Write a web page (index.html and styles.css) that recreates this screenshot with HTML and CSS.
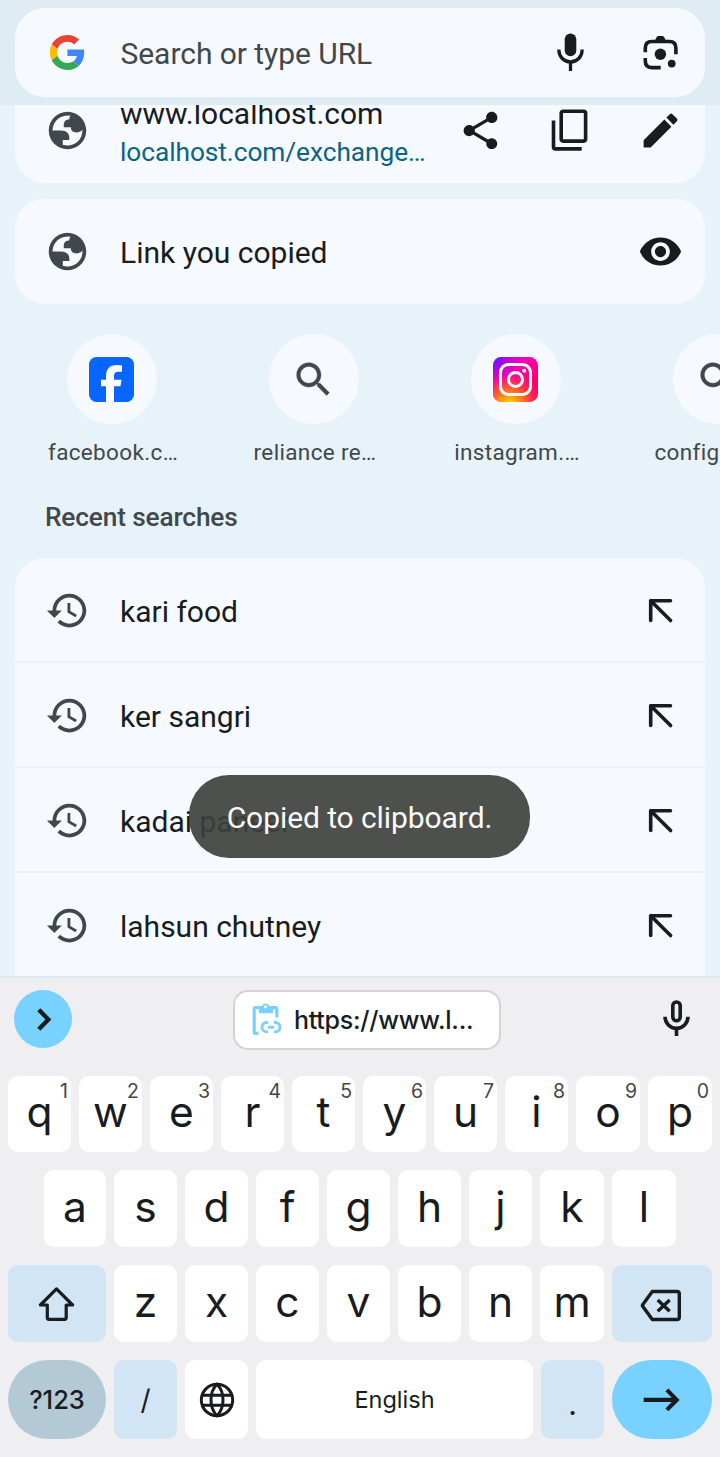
FILE: index.html
```html
<!DOCTYPE html>
<html lang="en">
<head>
<meta charset="utf-8">
<title>Search</title>
<link rel="stylesheet" href="styles.css">
</head>
<body>
<svg class="defs" width="0" height="0" aria-hidden="true">
  <symbol id="globe" viewBox="0 0 24 24"><path fill-rule="evenodd" d="M12 2C6.480 2 2 6.480 2 12s4.480 10 10 10 10-4.480 10-10S17.520 2 12 2zM4 12h4.400c3.407.022 4.922 1.730 4.543 5.127H9.488v2.470a8.004 8.004 0 0 0 10.498-8.083C19.327 12.504 18.332 13 17 13c-2.137 0-3.206-.916-3.206-2.750h-3.748c-.274-2.728.683-4.092 2.870-4.092 0-.975.327-1.597.811-1.970A8.004 8.004 0 0 0 4 12z"/></symbol>
  <symbol id="search" viewBox="0 0 24 24"><path stroke="currentColor" stroke-width=".2" d="M15.500 14h-.790l-.280-.270C15.410 12.590 16 11.110 16 9.500 16 5.910 13.090 3 9.500 3S3 5.910 3 9.500 5.910 16 9.500 16c1.610 0 3.090-.590 4.230-1.570l.270.280v.790l5 4.990L20.490 19l-4.990-5zm-6 0C7.010 14 5 11.990 5 9.500S7.010 5 9.500 5 14 7.010 14 9.500 11.990 14 9.500 14z"/></symbol>
  <symbol id="history" viewBox="0 0 24 24"><path d="M13 3c-4.970 0-9 4.030-9 9H1l3.890 3.890.070.140L9 12H6c0-3.870 3.130-7 7-7s7 3.130 7 7-3.130 7-7 7c-1.930 0-3.680-.790-4.940-2.060l-1.420 1.420C8.270 19.990 10.510 21 13 21c4.970 0 9-4.030 9-9s-4.030-9-9-9zm-1 5v5l4.280 2.540.720-1.210-3.500-2.080V8H12z"/></symbol>
  <symbol id="fill-up" viewBox="0 0 45 45"><path d="M32.500 12.700H12.700V32.500M12.700 12.700L32.600 32.600" fill="none" stroke="currentColor" stroke-width="3.600" stroke-linecap="round" stroke-linejoin="round"/></symbol>
</svg>

<header class="header">
  <div class="omnibox">
    <svg class="icon" viewBox="0 0 45 45"><g transform="translate(4.900 4.900) scale(.73)"><path fill="#EA4335" d="M24 9.500c3.540 0 6.710 1.220 9.210 3.600l6.850-6.850C35.900 2.380 30.470 0 24 0 14.620 0 6.510 5.380 2.560 13.220l7.980 6.190C12.430 13.720 17.740 9.500 24 9.500z"/><path fill="#4285F4" d="M46.980 24.550c0-1.570-.150-3.090-.380-4.550H24v9.020h12.940c-.580 2.960-2.260 5.480-4.780 7.180l7.730 6c4.510-4.180 7.090-10.360 7.090-17.650z"/><path fill="#FBBC05" d="M10.530 28.590c-.480-1.450-.760-2.990-.760-4.590s.270-3.140.760-4.590l-7.980-6.190C.920 16.460 0 20.120 0 24c0 3.880.920 7.540 2.560 10.780l7.970-6.190z"/><path fill="#34A853" d="M24 48c6.480 0 11.930-2.130 15.890-5.810l-7.730-6c-2.150 1.450-4.920 2.300-8.160 2.300-6.260 0-11.570-4.220-13.470-9.910l-7.980 6.190C6.510 42.620 14.620 48 24 48z"/></g></svg>
    <span class="omnibox-text">Search or type URL</span>
    <div class="actions">
      <svg class="icon" viewBox="0 0 45 45"><rect x="16.700" y="3.500" width="11.600" height="22.800" rx="5.800"/><path d="M10.900 19.500v.800a11.600 11.600 0 0 0 23.200 0v-.800M22.500 32v9" fill="none" stroke="currentColor" stroke-width="3.300"/></svg>
      <svg class="icon" viewBox="0 0 45 45"><path d="M7.300 22.300V18q0-6.500 6.500-6.500H31.400q6.500 0 6.500 6.500V24.300M7.300 28V31.100q0 6.500 6.500 6.500H22.700" fill="none" stroke="currentColor" stroke-width="3.600"/><path d="M16.700 11l1.900-3.700q.6-1.300 2-1.300h3.600q1.400 0 2 1.300L28.200 11z"/><circle cx="22.400" cy="24.300" r="5.700"/><circle cx="33.700" cy="33.600" r="3.900"/></svg>
    </div>
  </div>
</header>

<main class="suggestions">
  <section class="card card-top">
    <svg class="icon muted"><use href="#globe"/></svg>
    <div class="lines">
      <div class="title">www.localhost.com</div>
      <div class="url">localhost.com/exchange…</div>
    </div>
    <div class="actions">
      <svg class="icon" viewBox="0 0 24 24"><path d="M18 16.080c-.760 0-1.440.300-1.960.770L8.910 12.700c.050-.230.090-.460.090-.700s-.040-.470-.090-.700l7.050-4.110c.540.500 1.250.810 2.040.810 1.660 0 3-1.340 3-3s-1.340-3-3-3-3 1.340-3 3c0 .240.040.470.090.700L8.040 9.810C7.500 9.310 6.790 9 6 9c-1.660 0-3 1.340-3 3s1.340 3 3 3c.790 0 1.500-.310 2.040-.810l7.120 4.160c-.050.210-.080.430-.080.650 0 1.610 1.310 2.920 2.920 2.920s2.920-1.310 2.920-2.920-1.310-2.920-2.920-2.920z"/></svg>
      <svg class="icon" viewBox="0 0 45 45"><g fill="none" stroke="currentColor" stroke-width="3.600"><rect x="13.200" y="3.300" width="24.400" height="29.800" rx="2"/><path d="M5.500 12.500V38.900q0 2 2 2H33.700"/></g></svg>
      <svg class="icon" viewBox="0 0 24 24"><path d="M3 17.250V21h3.750L17.810 9.940l-3.750-3.750L3 17.250zM20.710 7.040c.390-.390.390-1.020 0-1.410l-2.340-2.340c-.390-.390-1.020-.390-1.410 0l-1.830 1.830 3.750 3.750 1.830-1.830z"/></svg>
    </div>
  </section>

  <section class="card">
    <svg class="icon muted"><use href="#globe"/></svg>
    <div class="title">Link you copied</div>
    <div class="actions">
      <svg class="icon" viewBox="0 0 24 24"><path d="M12 4.500C7 4.500 2.730 7.610 1 12c1.730 4.390 6 7.500 11 7.500s9.270-3.110 11-7.500c-1.730-4.390-6-7.500-11-7.500zM12 17c-2.760 0-5-2.240-5-5s2.240-5 5-5 5 2.240 5 5-2.240 5-5 5zm0-8c-1.660 0-3 1.340-3 3s1.340 3 3 3 3-1.340 3-3-1.340-3-3-3z"/></svg>
    </div>
  </section>

  <nav class="tiles">
    <div class="tile">
      <div class="disc"><svg class="icon" viewBox="0 0 45 45"><rect width="45" height="45" rx="7.500" fill="#0866ff"/><path fill="#fff" d="M17 45V29.300h-5v-6.600h5v-3C17 11.800 20.600 8 27.700 8c1.900 0 4.100.2 5.300.6v6.200c-.7-.1-1.900-.1-3.300-.1-3.300 0-4.700 1.300-4.700 4.600v3.400h7.600l-1.200 6.600H25V45z"/></svg></div>
      <div class="label">facebook.c…</div>
    </div>
    <div class="tile">
      <div class="disc"><svg class="icon muted"><use href="#search"/></svg></div>
      <div class="label">reliance re…</div>
    </div>
    <div class="tile">
      <div class="disc"><svg class="icon" viewBox="0 0 45 45">
        <defs>
          <linearGradient id="ig-base" x1="0" y1="0" x2="1" y2="1"><stop offset="0" stop-color="#d400d8"/><stop offset=".4" stop-color="#fa00b4"/><stop offset=".75" stop-color="#ff0069"/></linearGradient>
          <radialGradient id="ig-warm" cx=".36" cy="1.080" r=".85"><stop offset=".1" stop-color="#fc0"/><stop offset=".45" stop-color="#ff6a1c" stop-opacity=".9"/><stop offset="1" stop-color="#ff0069" stop-opacity="0"/></radialGradient>
          <radialGradient id="ig-cool" cx="0" cy="0" r=".62"><stop offset=".1" stop-color="#5b1cff"/><stop offset="1" stop-color="#c800e0" stop-opacity="0"/></radialGradient>
        </defs>
        <rect width="45" height="45" rx="8.500" fill="url(#ig-base)"/><rect width="45" height="45" rx="8.500" fill="url(#ig-warm)"/><rect width="45" height="45" rx="8.500" fill="url(#ig-cool)"/>
        <g fill="none" stroke="#fff" stroke-width="3"><rect x="7.500" y="7.500" width="30" height="30" rx="8"/><circle cx="22.500" cy="22.500" r="7"/></g><circle cx="31.200" cy="13.800" r="2" fill="#fff"/></svg></div>
      <div class="label">instagram.…</div>
    </div>
    <div class="tile">
      <div class="disc"><svg class="icon muted"><use href="#search"/></svg></div>
      <div class="label">config.serv…</div>
    </div>
  </nav>

  <h2 class="heading">Recent searches</h2>

  <section class="recent">
    <div class="row"><svg class="icon muted"><use href="#history"/></svg><div class="title">kari food</div><div class="actions"><svg class="icon"><use href="#fill-up"/></svg></div></div>
    <div class="row"><svg class="icon muted"><use href="#history"/></svg><div class="title">ker sangri</div><div class="actions"><svg class="icon"><use href="#fill-up"/></svg></div></div>
    <div class="row"><svg class="icon muted"><use href="#history"/></svg><div class="title">kadai paneer</div><div class="actions"><svg class="icon"><use href="#fill-up"/></svg></div></div>
    <div class="row"><svg class="icon muted"><use href="#history"/></svg><div class="title">lahsun chutney</div><div class="actions"><svg class="icon"><use href="#fill-up"/></svg></div></div>
  </section>
  <div class="toast">Copied to clipboard.</div>
</main>

<footer class="keyboard">
  <div class="toolbar">
    <div class="expand"><svg width="58" height="58" viewBox="0 0 58 58"><path d="M24.800 19.700L34.400 29.500L24.800 39.300" fill="none" stroke="currentColor" stroke-width="4.300"/></svg></div>
    <div class="chip">
      <svg width="36" height="40" viewBox="0 0 36 40"><g fill="none" stroke="#78d1ff" stroke-width="3.200"><path d="M9.500 33.300H6.500q-1.300 0-1.300-1.300V9q0-1.400 1.400-1.400H26.400q1.400 0 1.400 1.400V17.500"/><path d="M19 22.500H17.700a4.700 4.700 0 0 0 0 9.400H19M25 22.500H26.300a4.700 4.700 0 0 1 0 9.400H25M19 27.200H25" stroke-width="2.900"/></g><path fill="#78d1ff" d="M10 6H12.900A3.900 3.900 0 0 1 20.100 6H24V13.300H10z"/><circle cx="16.500" cy="6.800" r="1.600" fill="#fff"/></svg>
      <span>https://www.l...</span>
    </div>
    <svg class="voice" width="45" height="45" viewBox="0 0 45 45"><g fill="none" stroke="currentColor" stroke-width="3.600"><rect x="18.800" y="6" width="7.400" height="18.800" rx="3.700"/><path d="M11 20.800a11.500 11.500 0 0 0 23 0M22.500 32.500V40"/></g></svg>
  </div>

  <div class="keys keys-1">
    <div class="key">q<sup>1</sup></div><div class="key">w<sup>2</sup></div><div class="key">e<sup>3</sup></div><div class="key">r<sup>4</sup></div><div class="key">t<sup>5</sup></div><div class="key">y<sup>6</sup></div><div class="key">u<sup>7</sup></div><div class="key">i<sup>8</sup></div><div class="key">o<sup>9</sup></div><div class="key">p<sup>0</sup></div>
  </div>
  <div class="keys keys-2">
    <div class="key">a</div><div class="key">s</div><div class="key">d</div><div class="key">f</div><div class="key">g</div><div class="key">h</div><div class="key">j</div><div class="key">k</div><div class="key">l</div>
  </div>
  <div class="keys keys-3">
    <div class="key tint"><svg width="40" height="40" viewBox="0 0 40 40"><path d="M19.500 4.900L35.600 21H29.200V33.800q0 1.500-1.500 1.500H11.800q-1.500 0-1.500-1.500V21H3.400z" fill="none" stroke="currentColor" stroke-width="3.200" stroke-linejoin="round"/></svg></div>
    <div class="key">z</div><div class="key">x</div><div class="key">c</div><div class="key">v</div><div class="key">b</div><div class="key">n</div><div class="key">m</div>
    <div class="key tint"><svg width="44" height="40" viewBox="0 0 44 40"><path d="M12.300 7.500H37q2.300 0 2.300 2.300V33.200q0 2.300-2.300 2.300H12.300L2.700 22.300q-.6-.8 0-1.600zM17.700 16L29.700 27.200M29.700 16L17.700 27.200" fill="none" stroke="currentColor" stroke-width="3.400" stroke-linejoin="round"/></svg></div>
  </div>
  <div class="keys keys-4">
    <div class="key mode">?123</div>
    <div class="key tint slash">/</div>
    <div class="key"><svg width="40" height="40" viewBox="0 0 40 40"><g fill="none" stroke="currentColor" stroke-width="3"><circle cx="20" cy="20" r="15.700"/><path d="M4.800 15.200H35.200M4.800 25.200H35.200"/><path d="M20 4.300q-6 5.900-6 15.700t6 15.700q6-5.900 6-15.700T20 4.300z"/></g></svg></div>
    <div class="key space">English</div>
    <div class="key tint dot">.</div>
    <div class="key go"><svg width="44" height="40" viewBox="0 0 44 40"><path d="M3.700 19.900H36M26.900 9.900L36.700 19.900L26.900 29.900" fill="none" stroke="currentColor" stroke-width="4.200"/></svg></div>
  </div>
</footer>
</body>
</html>
```

FILE: styles.css
```css
* { box-sizing: border-box; }

body {
  margin: 0;
  width: 720px;
  height: 1457px;
  overflow: hidden;
  display: flex;
  flex-direction: column;
  background: #e7f2f9;
  color: #181c1f;
  font-family: Roboto, "Liberation Sans", sans-serif;
  font-size: 30px;
}

.defs { position: absolute; }

.icon {
  width: 45px;
  height: 45px;
  flex: none;
  display: block;
  fill: currentColor;
}

.muted { color: #41484d; }

.header {
  position: relative;
  z-index: 1;
  height: 105px;
  flex: none;
  padding: 8px 15px;
  background: #e0ecf4;
}

.omnibox,
.card,
.row {
  display: flex;
  align-items: center;
  padding: 0 22px 0 30px;
  background: #f6faff;
}

.omnibox { height: 89px; border-radius: 30px; }

.omnibox-text {
  margin-left: 30.5px;
  padding-top: 2px;
  color: #41484d;
  letter-spacing: -.05px;
}

.actions {
  display: flex;
  gap: 45px;
  margin-left: auto;
}

.suggestions {
  position: relative;
  height: 871px;
  flex: none;
  padding: 0 15px;
  overflow: hidden;
}

.card {
  height: 105px;
  margin-bottom: 16px;
  border-radius: 30px;
}

.card-top { margin-top: -27px; }

.title {
  margin-left: 30px;
  padding-top: 3px;
  line-height: 36px;
  white-space: nowrap;
}

.lines { padding-top: 4px; }
.lines .title { padding-top: 0; }

.url {
  margin: 3px 0 0 30px;
  color: #0b6485;
  font-size: 26.25px;
  line-height: 34px;
  letter-spacing: -.05px;
  white-space: nowrap;
}

.tiles {
  display: flex;
  gap: 67px;
  width: 900px;
  margin-top: 30px;
  padding-left: 29.5px;
}

.tile {
  width: 135px;
  display: flex;
  flex-direction: column;
  align-items: center;
}

.disc {
  width: 90px;
  height: 90px;
  display: grid;
  place-items: center;
  padding-right: 1px;
  border-radius: 50%;
  background: #f6faff;
}

.label {
  margin-top: 14px;
  padding-left: 2px;
  color: #41484d;
  font-size: 22.5px;
  line-height: 28px;
  letter-spacing: .35px;
  white-space: nowrap;
}

.heading {
  margin: 35px 0 0 30px;
  color: #41484d;
  font-size: 26.25px;
  font-weight: 500;
  line-height: 32px;
  letter-spacing: -.15px;
}

.recent {
  display: flex;
  flex-direction: column;
  gap: 2px;
  margin-top: 25px;
  overflow: hidden;
  border-radius: 30px 30px 0 0;
}

.row { height: 103px; padding-top: 2px; }

.toast {
  position: absolute;
  left: 189px;
  top: 670px;
  width: 341px;
  height: 83px;
  border-radius: 40px;
  background: rgba(61, 63, 61, .914);
  color: #fafafa;
  line-height: 85px;
  letter-spacing: -.08px;
  text-align: center;
}

.keyboard {
  flex: 1;
  display: flex;
  flex-direction: column;
  gap: 18px;
  padding: 0 8px;
  border-top: 2px solid #e0e8ef;
  background: #efeff1;
  font-family: Inter, Roboto, sans-serif;
}

.toolbar {
  height: 80px;
  display: flex;
  align-items: flex-start;
  justify-content: space-between;
  padding: 12px 13px 0 6px;
}

.expand {
  width: 58px;
  height: 58px;
  border-radius: 50%;
  background: #78d1ff;
}

.expand svg { display: block; }

.chip {
  width: 268px;
  height: 60px;
  margin-left: 161px;
  margin-right: auto;
  display: flex;
  align-items: center;
  gap: 9px;
  padding-left: 14px;
  border: 2px solid #d3d3d5;
  border-radius: 15px;
  background: #fff;
  font-size: 25px;
  font-weight: 500;
  letter-spacing: -.25px;
  white-space: nowrap;
}

.voice { margin-top: 6px; }

.keys { display: grid; gap: 8px; }
.keys-1 { grid-template-columns: repeat(8, 63px) 64px 64px; grid-template-rows: 76px; }
.keys-2 { grid-template-columns: 62px repeat(6, 63px) 64px 64px; grid-template-rows: 77px; padding-left: 36px; }
.keys-3 { grid-template-columns: 98px repeat(6, 63px) 64px 100px; grid-template-rows: 77px; }
.keys-4 { grid-template-columns: 98px 63px 63px 277px 63px 100px; grid-template-rows: 79px; }

.key {
  position: relative;
  display: flex;
  align-items: center;
  justify-content: center;
  border-radius: 10px;
  background: #fff;
  font-size: 42.500px;
  line-height: 72px;
  padding-bottom: 4px;
}

.key:has(svg) { padding-bottom: 0; }

.key sup {
  position: absolute;
  top: 5px;
  right: 3px;
  color: #444749;
  font-size: 19.500px;
  line-height: 20px;
}

.tint { background: #d2e5f4; }
.mode { padding-bottom: 0; border-radius: 40px; background: #b4c9d6; font-size: 25.500px; font-weight: 500; }
.slash { padding-bottom: 0; font-size: 28px; }
.space { padding-bottom: 0; font-size: 23.500px; }
.dot { padding: 8px 0 0; font-size: 30px; line-height: 60px; }
.go { border-radius: 40px; background: #78d1ff; }
```
